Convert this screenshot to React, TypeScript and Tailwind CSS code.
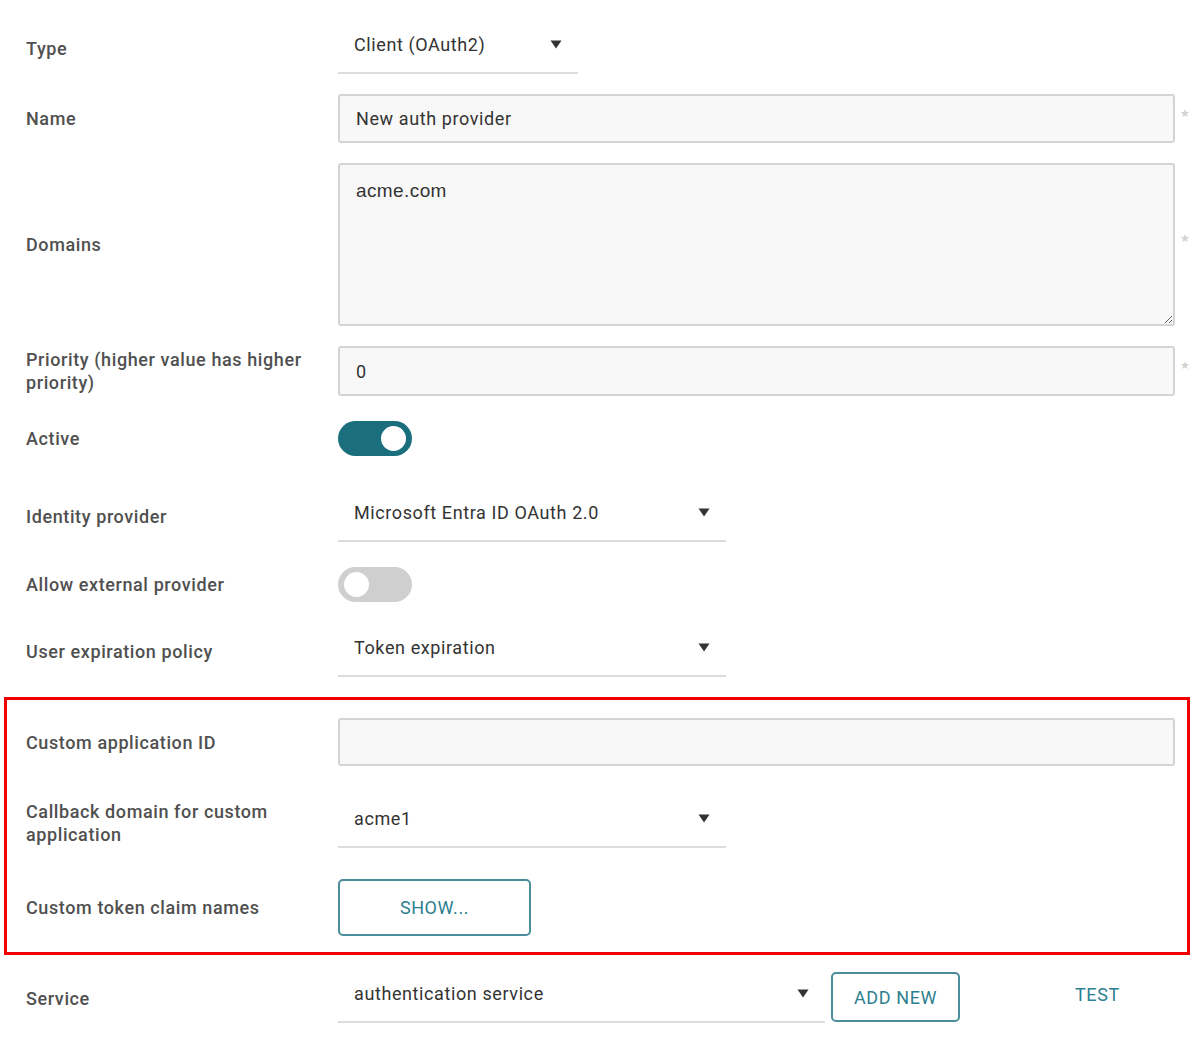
import React from "react";

const labelCls =
  "w-[312px] shrink-0 pr-[22px] text-[18px] leading-[23px] font-medium text-[#505050] tracking-[0.6px]";

function Arrow() {
  return (
    <svg width="12" height="9" viewBox="0 0 12 9" className="shrink-0">
      <path d="M0.5 0.5 L11.5 0.5 L6 8.5 Z" fill="#333" />
    </svg>
  );
}

function Star({ top = "mt-[12px]" }: { top?: string }) {
  return <span className={`ml-[5px] w-[14px] text-[11px] text-[#d2d2d2] self-start ${top}`}>★</span>;
}

function Select({ value, width }: { value: string; width: string }) {
  return (
    <div className={`${width} h-full flex items-center justify-between pl-[16px] pr-[16px] border-b-2 border-[#dcdcdc]`}>
      <span className="text-[18px] text-[#333] tracking-[0.6px]">{value}</span>
      <Arrow />
    </div>
  );
}

function TextInput({ value }: { value: string }) {
  return (
    <div className="flex-1 h-full flex items-center px-[16px] bg-[#f8f8f8] border-2 border-[#d4d4d4] rounded-[3px] text-[18px] text-[#333] tracking-[0.6px]">
      {value}
    </div>
  );
}

function Toggle({ on }: { on: boolean }) {
  return (
    <div
      className={`w-[74px] h-[35px] rounded-full flex items-center px-[6px] ${
        on ? "bg-[#1b6f7d] justify-end" : "bg-[#cfcfcf] justify-start"
      }`}
    >
      <div className="w-[25px] h-[25px] rounded-full bg-white" />
    </div>
  );
}

function Row({
  label,
  className,
  low,
  children,
}: {
  label: string;
  className: string;
  low?: boolean;
  children: React.ReactNode;
}) {
  return (
    <div className={`flex items-center ${className}`}>
      <div className={`${labelCls} ${low ? "pt-[7px]" : ""}`}>{label}</div>
      <div className="flex-1 h-full flex items-center">{children}</div>
    </div>
  );
}

export default function App() {
  return (
    <div className="w-[1194px] h-[1056px] bg-white font-['Roboto',sans-serif] overflow-hidden">
      <div className="pt-[16px] pl-[26px]">
        <Row label="Type" className="h-[58px]" low>
          <Select value="Client (OAuth2)" width="w-[240px]" />
        </Row>

        <Row label="Name" className="h-[49px] mt-[20px]">
          <TextInput value="New auth provider" />
          <Star />
        </Row>

        <Row label="Domains" className="h-[163px] mt-[20px]">
          <textarea
            readOnly
            value="acme.com"
            className="flex-1 h-full resize-y px-[16px] pt-[12px] bg-[#f8f8f8] border-2 border-[#d4d4d4] rounded-[3px] text-[19px] tracking-[0.4px] text-[#333] font-['Liberation_Sans',sans-serif] outline-none"
          />
          <Star top="mt-[68px]" />
        </Row>

        <Row label="Priority (higher value has higher priority)" className="h-[50px] mt-[20px]">
          <TextInput value="0" />
          <Star />
        </Row>

        <Row label="Active" className="h-[56px] mt-[14px]">
          <Toggle on />
        </Row>

        <Row label="Identity provider" className="h-[58px] mt-[18px]" low>
          <Select value="Microsoft Entra ID OAuth 2.0" width="w-[388px]" />
        </Row>

        <Row label="Allow external provider" className="h-[56px] mt-[14px]">
          <Toggle on={false} />
        </Row>

        <Row label="User expiration policy" className="h-[58px] mt-[7px]" low>
          <Select value="Token expiration" width="w-[388px]" />
        </Row>
      </div>

      <div className="ml-[4px] w-[1186px] mt-[20px] h-[258px] border-[3px] border-[#f00000] pl-[19px] pt-[18px] pr-[12px]">
        <Row label="Custom application ID" className="h-[48px]">
          <TextInput value="" />
        </Row>
        <Row label="Callback domain for custom application" className="h-[58px] mt-[24px]" low>
          <Select value="acme1" width="w-[388px]" />
        </Row>
        <Row label="Custom token claim names" className="h-[57px] mt-[31px]">
          <button className="w-[193px] h-full border-2 border-[#4a8e9b] rounded-[5px] text-[18px] tracking-[0.6px] text-[#2d7f8f] uppercase">
            SHOW...
          </button>
        </Row>
      </div>

      <div className="pl-[26px] mt-[11px]">
        <Row label="Service" className="h-[57px]" low>
          <Select value="authentication service" width="w-[487px]" />
          <button className="ml-[6px] w-[129px] h-[50px] self-start mt-[6px] border-2 border-[#4a8e9b] rounded-[5px] text-[18px] tracking-[0.6px] text-[#2d7f8f]">
            ADD NEW
          </button>
          <span className="ml-[115px] text-[18px] tracking-[0.6px] text-[#2d7f8f]">TEST</span>
        </Row>
      </div>
    </div>
  );
}
